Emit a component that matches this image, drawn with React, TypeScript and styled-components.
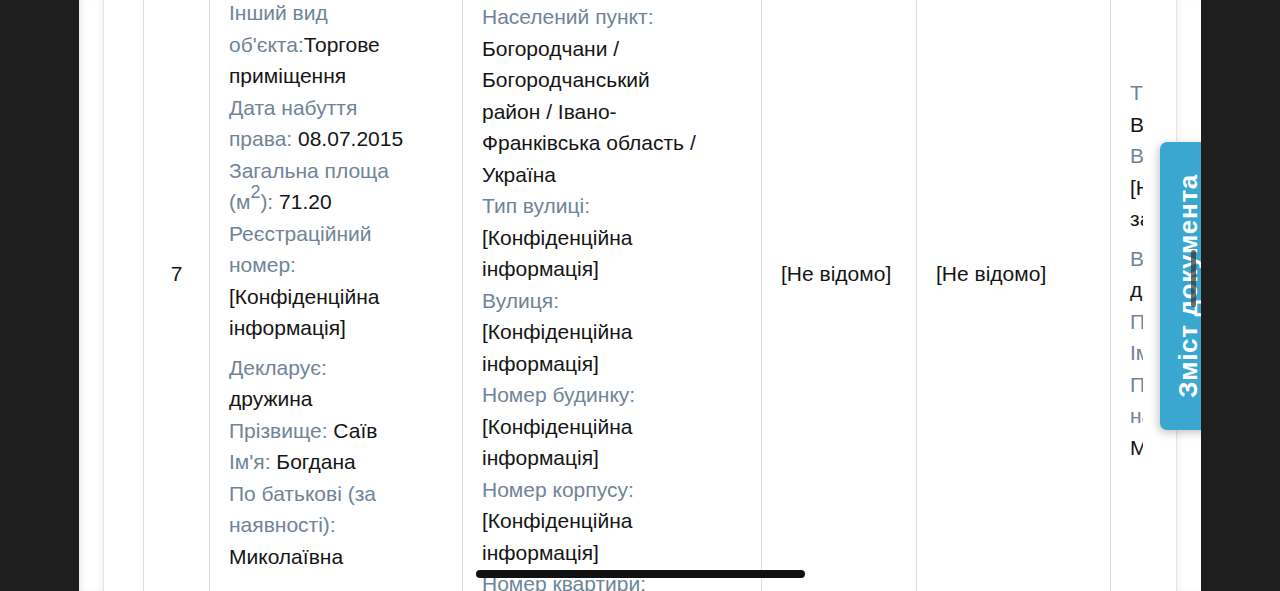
import React from "react";
import styled, { createGlobalStyle } from "styled-components";

const GlobalStyle = createGlobalStyle`
  html, body {
    margin: 0;
    padding: 0;
    background: #1e1e1e;
    overflow: hidden;
  }
  body {
    font-family: "Liberation Sans", Arial, Helvetica, sans-serif;
  }
`;

const Frame = styled.div`
  position: relative;
  width: 1122px;
  height: 591px;
  margin: 0 auto;
  background: #ffffff;
  overflow: hidden;
  box-shadow: inset 6px 0 10px -8px rgba(0, 0, 0, 0.25);
`;

const Card = styled.div`
  margin: -158px 24px 0;
  padding: 0 33px 0 39px;
  background: #ffffff;
  border: 1px solid #e3e3e3;
  box-shadow: 0 0 10px rgba(0, 0, 0, 0.07);
`;

const Scroller = styled.div`
  width: 1000px;
  overflow: hidden;
`;

const Row = styled.div`
  display: grid;
  grid-template-columns: 66px 253px 299px 155px 194px 253px;
  width: max-content;
  height: 862px;
  font-size: 21px;
  line-height: 31.5px;
  color: #151515;
`;

const Cell = styled.div<{ $middle?: boolean; $center?: boolean; $tight?: boolean; $lift?: number }>`
  box-sizing: border-box;
  border-left: 1px solid #dcdcdc;
  padding: ${(p) => (p.$center ? "20px 0" : p.$tight ? "20px 19px" : "20px 57px 20px 19px")};
  padding-bottom: ${(p) => 20 + (p.$lift ?? 0)}px;
  display: flex;
  flex-direction: column;
  justify-content: ${(p) => (p.$middle ? "center" : "flex-start")};
  text-align: ${(p) => (p.$center ? "center" : "left")};
`;

const Block = styled.div<{ $gap?: number }>`
  margin-top: ${(p) => p.$gap ?? 0}px;
`;

const Field = styled.div``;

const Label = styled.span<{ $stacked?: boolean }>`
  color: #6f8499;
  display: ${(p) => (p.$stacked ? "block" : "inline")};
`;

const Value = styled.span`
  color: #151515;
`;

const Sup = styled.sup`
  font-size: 0.85em;
  line-height: 0;
  vertical-align: 0.6em;
`;

const SideTab = styled.button`
  position: absolute;
  top: 142px;
  left: 1081px;
  width: 56px;
  height: 288px;
  padding: 0;
  border: none;
  border-radius: 7px;
  background: #3aa7d0;
  box-shadow: -2px 3px 8px rgba(0, 0, 0, 0.22);
  color: #ffffff;
  font-family: "Liberation Sans", Arial, sans-serif;
  font-weight: 700;
  font-size: 26px;
  letter-spacing: 0.7px;
  display: flex;
  align-items: center;
  justify-content: center;
`;

const TabText = styled.span`
  writing-mode: vertical-rl;
  transform: rotate(180deg);
  white-space: nowrap;
`;

const HScrollIndicator = styled.div`
  position: absolute;
  left: 397px;
  top: 570px;
  width: 329px;
  height: 8px;
  border-radius: 4px;
  background: #111111;
`;

const VScrollIndicator = styled.div`
  position: absolute;
  left: 1112px;
  top: 250px;
  width: 5px;
  height: 57px;
  border-radius: 3px;
  background: rgba(50, 50, 50, 0.7);
`;

const Conf = "[Конфіденційна інформація]";

export default function App() {
  return (
    <>
      <GlobalStyle />
      <Frame>
        <Card>
          <Scroller>
            <Row>
              <Cell $middle $center>
                7
              </Cell>
              <Cell>
                <Block>
                  <Field>
                    <Label>Тип:</Label> <Value>Інше</Value>
                  </Field>
                  <Field>
                    <Label>Країна:</Label> <Value>Україна</Value>
                  </Field>
                  <Field>
                    <Label>Частка:</Label> <Value>100%</Value>
                  </Field>
                  <Field>
                    <Label>Право:</Label> <Value>Власність</Value>
                  </Field>
                </Block>
                <Block $gap={8}>
                  <Field>
                    <Label>Інший вид об'єкта:</Label>
                    <Value>Торгове приміщення</Value>
                  </Field>
                  <Field>
                    <Label>Дата набуття права:</Label> <Value>08.07.2015</Value>
                  </Field>
                  <Field>
                    <Label>
                      Загальна площа (м<Sup>2</Sup>):
                    </Label>{" "}
                    <Value>71.20</Value>
                  </Field>
                  <Field>
                    <Label>Реєстраційний номер:</Label> <Value>{Conf}</Value>
                  </Field>
                </Block>
                <Block $gap={8}>
                  <Field>
                    <Label>Декларує:</Label> <Value>дружина</Value>
                  </Field>
                  <Field>
                    <Label>Прізвище:</Label> <Value>Саїв</Value>
                  </Field>
                  <Field>
                    <Label>Ім'я:</Label> <Value>Богдана</Value>
                  </Field>
                  <Field>
                    <Label>По батькові (за наявності):</Label> <Value>Миколаївна</Value>
                  </Field>
                </Block>
              </Cell>
              <Cell>
                <Block>
                  <Field>
                    <Label>Країна:</Label> <Value>Україна</Value>
                  </Field>
                  <Field>
                    <Label>Індекс:</Label> <Value>[Не відомо]</Value>
                  </Field>
                  <Field>
                    <Label>Тип:</Label> <Value>Місто</Value>
                  </Field>
                  <Field>
                    <Label>Статус:</Label> <Value>Чинний</Value>
                  </Field>
                </Block>
                <Block $gap={12}>
                  <Field>
                    <Label>Населений пункт:</Label>{" "}
                    <Value>Богородчани / Богородчанський район / Івано-Франківська область / Україна</Value>
                  </Field>
                  <Field>
                    <Label>Тип вулиці:</Label> <Value>{Conf}</Value>
                  </Field>
                  <Field>
                    <Label>Вулиця:</Label> <Value>{Conf}</Value>
                  </Field>
                  <Field>
                    <Label>Номер будинку:</Label> <Value>{Conf}</Value>
                  </Field>
                  <Field>
                    <Label>Номер корпусу:</Label> <Value>{Conf}</Value>
                  </Field>
                  <Field>
                    <Label>Номер квартири:</Label> <Value>{Conf}</Value>
                  </Field>
                </Block>
              </Cell>
              <Cell $middle $tight>
                [Не відомо]
              </Cell>
              <Cell $middle $tight>
                [Не відомо]
              </Cell>
              <Cell $middle $lift={8}>
                <Block>
                  <Field>
                    <Label $stacked>Тип права:</Label>
                    <Value>Власність</Value>
                  </Field>
                  <Field>
                    <Label $stacked>Вартість:</Label>
                    <Value>[Не застосовується]</Value>
                  </Field>
                </Block>
                <Block $gap={8}>
                  <Field>
                    <Label $stacked>Власник:</Label>
                    <Value>дружина</Value>
                  </Field>
                  <Field>
                    <Label>Прізвище:</Label> <Value>Саїв</Value>
                  </Field>
                  <Field>
                    <Label>Ім'я:</Label> <Value>Богдана</Value>
                  </Field>
                  <Field>
                    <Label>По батькові (за наявності):</Label> <Value>Миколаївна</Value>
                  </Field>
                </Block>
              </Cell>
            </Row>
          </Scroller>
        </Card>
        <SideTab type="button">
          <TabText>Зміст документа</TabText>
        </SideTab>
        <VScrollIndicator />
        <HScrollIndicator />
      </Frame>
    </>
  );
}
